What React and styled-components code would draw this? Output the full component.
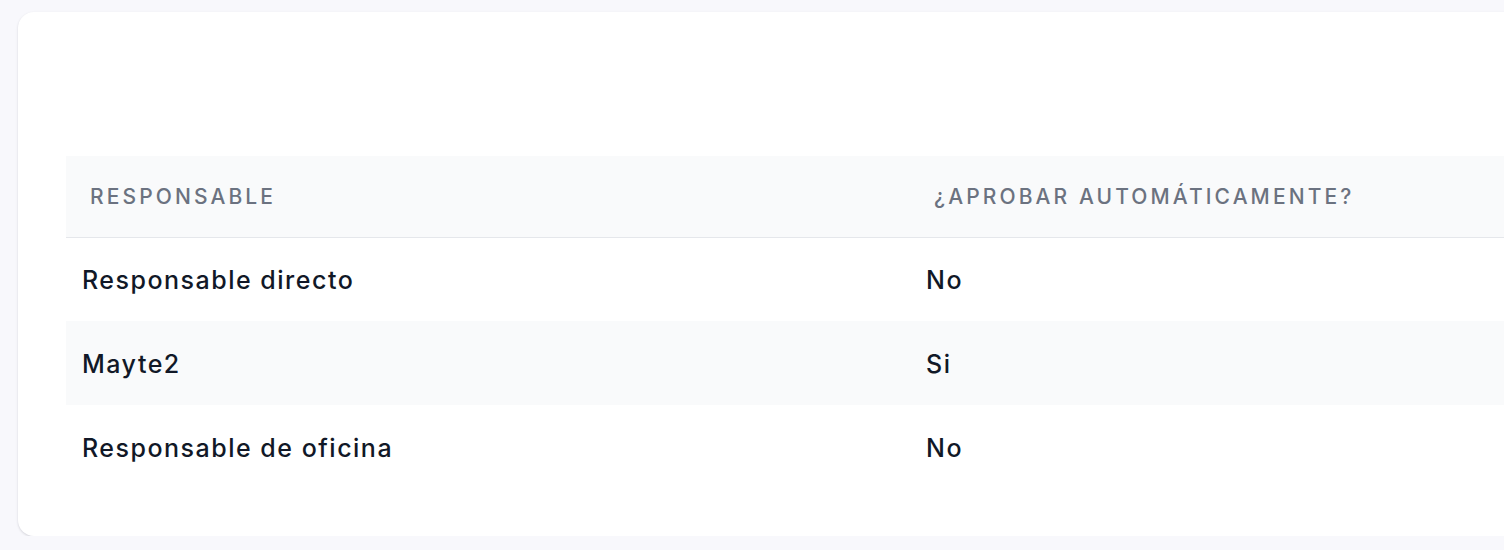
import React from "react";
import styled, { createGlobalStyle } from "styled-components";

const Global = createGlobalStyle`
  html, body { margin: 0; padding: 0; background: #f8f8fc; overflow: hidden; }
  body { font-family: Inter, "Noto Sans", sans-serif; }
  *, *::before, *::after { box-sizing: border-box; }
`;

const Page = styled.div`
  padding: 12px 0 0 18px;
  width: 1600px;
`;

const Card = styled.div`
  background: #ffffff;
  border-radius: 16px;
  box-shadow: 0 1px 3px rgba(17, 24, 39, 0.1), 0 1px 2px rgba(17, 24, 39, 0.06);
  padding: 144px 0 47px 48px;
`;

const Table = styled.table`
  width: 100%;
  border-collapse: collapse;
  table-layout: fixed;
`;

const HeadRow = styled.tr`
  background: #f9fafb;
  border-bottom: 1px solid #e5e7eb;
`;

const Th = styled.th`
  height: 81px;
  padding: 0 24px;
  text-align: left;
  font-size: 21px;
  font-weight: 500;
  letter-spacing: 3.1px;
  text-transform: uppercase;
  color: #6b7280;
  width: ${(p) => p.$w || "auto"};
`;

const Row = styled.tr`
  background: ${(p) => (p.$striped ? "#f9fafb" : "#ffffff")};
`;

const Td = styled.td`
  height: 84px;
  padding: 1px 16px 0;
  font-size: 25px;
  font-weight: 500;
  letter-spacing: 1.5px;
  color: #111827;
`;

const rows = [
  ["Responsable directo", "No"],
  ["Mayte2", "Si"],
  ["Responsable de oficina", "No"],
];

export default function App() {
  return (
    <>
      <Global />
      <Page>
        <Card>
          <Table>
            <thead>
              <HeadRow>
                <Th $w="844px">Responsable</Th>
                <Th>¿Aprobar automáticamente?</Th>
              </HeadRow>
            </thead>
            <tbody>
              {rows.map((r, i) => (
                <Row key={i} $striped={i % 2 === 1}>
                  <Td>{r[0]}</Td>
                  <Td>{r[1]}</Td>
                </Row>
              ))}
            </tbody>
          </Table>
        </Card>
      </Page>
    </>
  );
}
